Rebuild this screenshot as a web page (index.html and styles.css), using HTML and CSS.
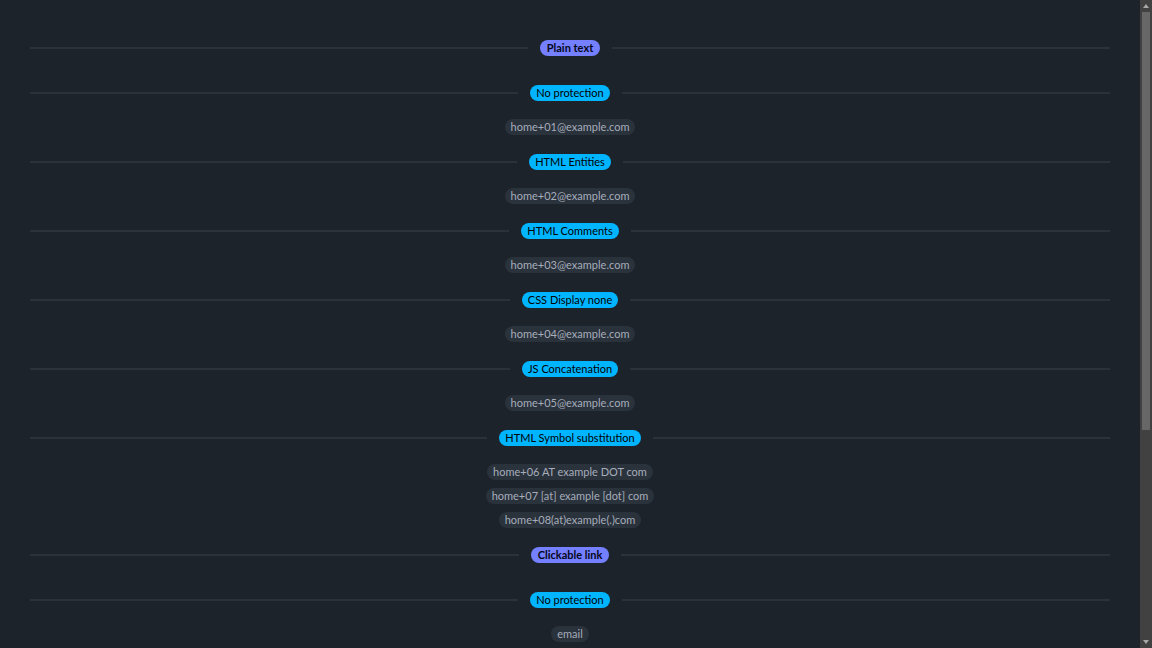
FILE: index.html
```html
<!DOCTYPE html>
<html lang="en">
<head>
<meta charset="utf-8">
<title>Email obfuscation</title>
<link rel="stylesheet" href="styles.css">
</head>
<body>
<main class="page">
  <section class="group">
    <div class="divider"><span class="badge badge-primary">Plain text</span></div>
    <div class="sub">
      <div class="divider"><span class="badge badge-info">No protection</span></div>
      <div class="emails"><span class="badge badge-ghost">home+01@example.com</span></div>
      <div class="divider"><span class="badge badge-info">HTML Entities</span></div>
      <div class="emails"><span class="badge badge-ghost">home+02@example.com</span></div>
      <div class="divider"><span class="badge badge-info">HTML Comments</span></div>
      <div class="emails"><span class="badge badge-ghost">home+03@example.com</span></div>
      <div class="divider"><span class="badge badge-info">CSS Display none</span></div>
      <div class="emails"><span class="badge badge-ghost">home+04@example.com</span></div>
      <div class="divider"><span class="badge badge-info">JS Concatenation</span></div>
      <div class="emails"><span class="badge badge-ghost">home+05@example.com</span></div>
      <div class="divider"><span class="badge badge-info">HTML Symbol substitution</span></div>
      <div class="emails">
        <span class="badge badge-ghost">home+06 AT example DOT com</span>
        <span class="badge badge-ghost">home+07 [at] example [dot] com</span>
        <span class="badge badge-ghost">home+08(at)example(.)com</span>
      </div>
    </div>
  </section>
  <section class="group">
    <div class="divider"><span class="badge badge-primary">Clickable link</span></div>
    <div class="sub">
      <div class="divider"><span class="badge badge-info">No protection</span></div>
      <div class="emails last"><a class="badge badge-ghost" href="#">email</a></div>
    </div>
  </section>
</main>
<div class="scrollbar" aria-hidden="true">
  <div class="sb-button"><span class="arrow arrow-up"></span></div>
  <div class="sb-track"><div class="sb-thumb"></div></div>
  <div class="sb-button"><span class="arrow arrow-down"></span></div>
</div>
</body>
</html>
```
FILE: styles.css
```css
html {
  color-scheme: dark;
  background: #1d232a;
  height: 100%;
  overflow: hidden;
}
body {
  margin: 0;
  height: 100%;
  display: flex;
  background: #1d232a;
  color: #a6adbb;
  font-family: Lato, "Noto Sans", sans-serif;
  font-size: 11px;
}
.page {
  flex: 1 1 auto;
  min-width: 0;
  box-sizing: border-box;
  height: 100%;
  overflow: hidden;
  padding: 40px 30px 0;
  display: flex;
  flex-direction: column;
}
.scrollbar {
  width: 12px;
  flex: 0 0 12px;
  height: 100%;
  display: flex;
  flex-direction: column;
  background: #414141;
}
.sb-button {
  height: 12px;
  flex: 0 0 12px;
  display: flex;
  align-items: center;
  justify-content: center;
}
.arrow {
  width: 0;
  height: 0;
  border-left: 3.5px solid transparent;
  border-right: 3.5px solid transparent;
}
.arrow-up {
  border-bottom: 4px solid #a8a8a8;
}
.arrow-down {
  border-top: 4px solid #a8a8a8;
}
.sb-track {
  flex: 1 1 auto;
  padding: 0 2px;
}
.sb-thumb {
  height: 418px;
  background: #676767;
}
.group {
  display: flex;
  flex-direction: column;
  flex-shrink: 0;
}
.sub {
  margin-top: 29px;
  display: flex;
  flex-direction: column;
}
.divider {
  display: flex;
  align-items: center;
  gap: 12px;
  height: 16px;
  flex-shrink: 0;
}
.divider::before,
.divider::after {
  content: "";
  flex: 1 1 0;
  height: 2px;
  background: #2c323a;
}
.emails {
  display: flex;
  flex-direction: column;
  align-items: center;
  gap: 8px;
  padding: 18px 0 19px;
}
.emails.last {
  padding-bottom: 0;
}
.badge {
  display: inline-flex;
  align-items: center;
  justify-content: center;
  height: 16px;
  padding: 0 8px;
  border-radius: 999px;
  line-height: 16px;
  white-space: nowrap;
  text-decoration: none;
}
.badge-primary {
  background: #7480ff;
  color: #050617;
  font-weight: 700;
  padding: 0 7px;
}
.badge-info {
  background: #00b5ff;
  color: #000000;
  padding: 0 6px;
}
.badge-ghost {
  background: #2a323c;
  color: #a6adbb;
  padding: 0 6px;
}
```
